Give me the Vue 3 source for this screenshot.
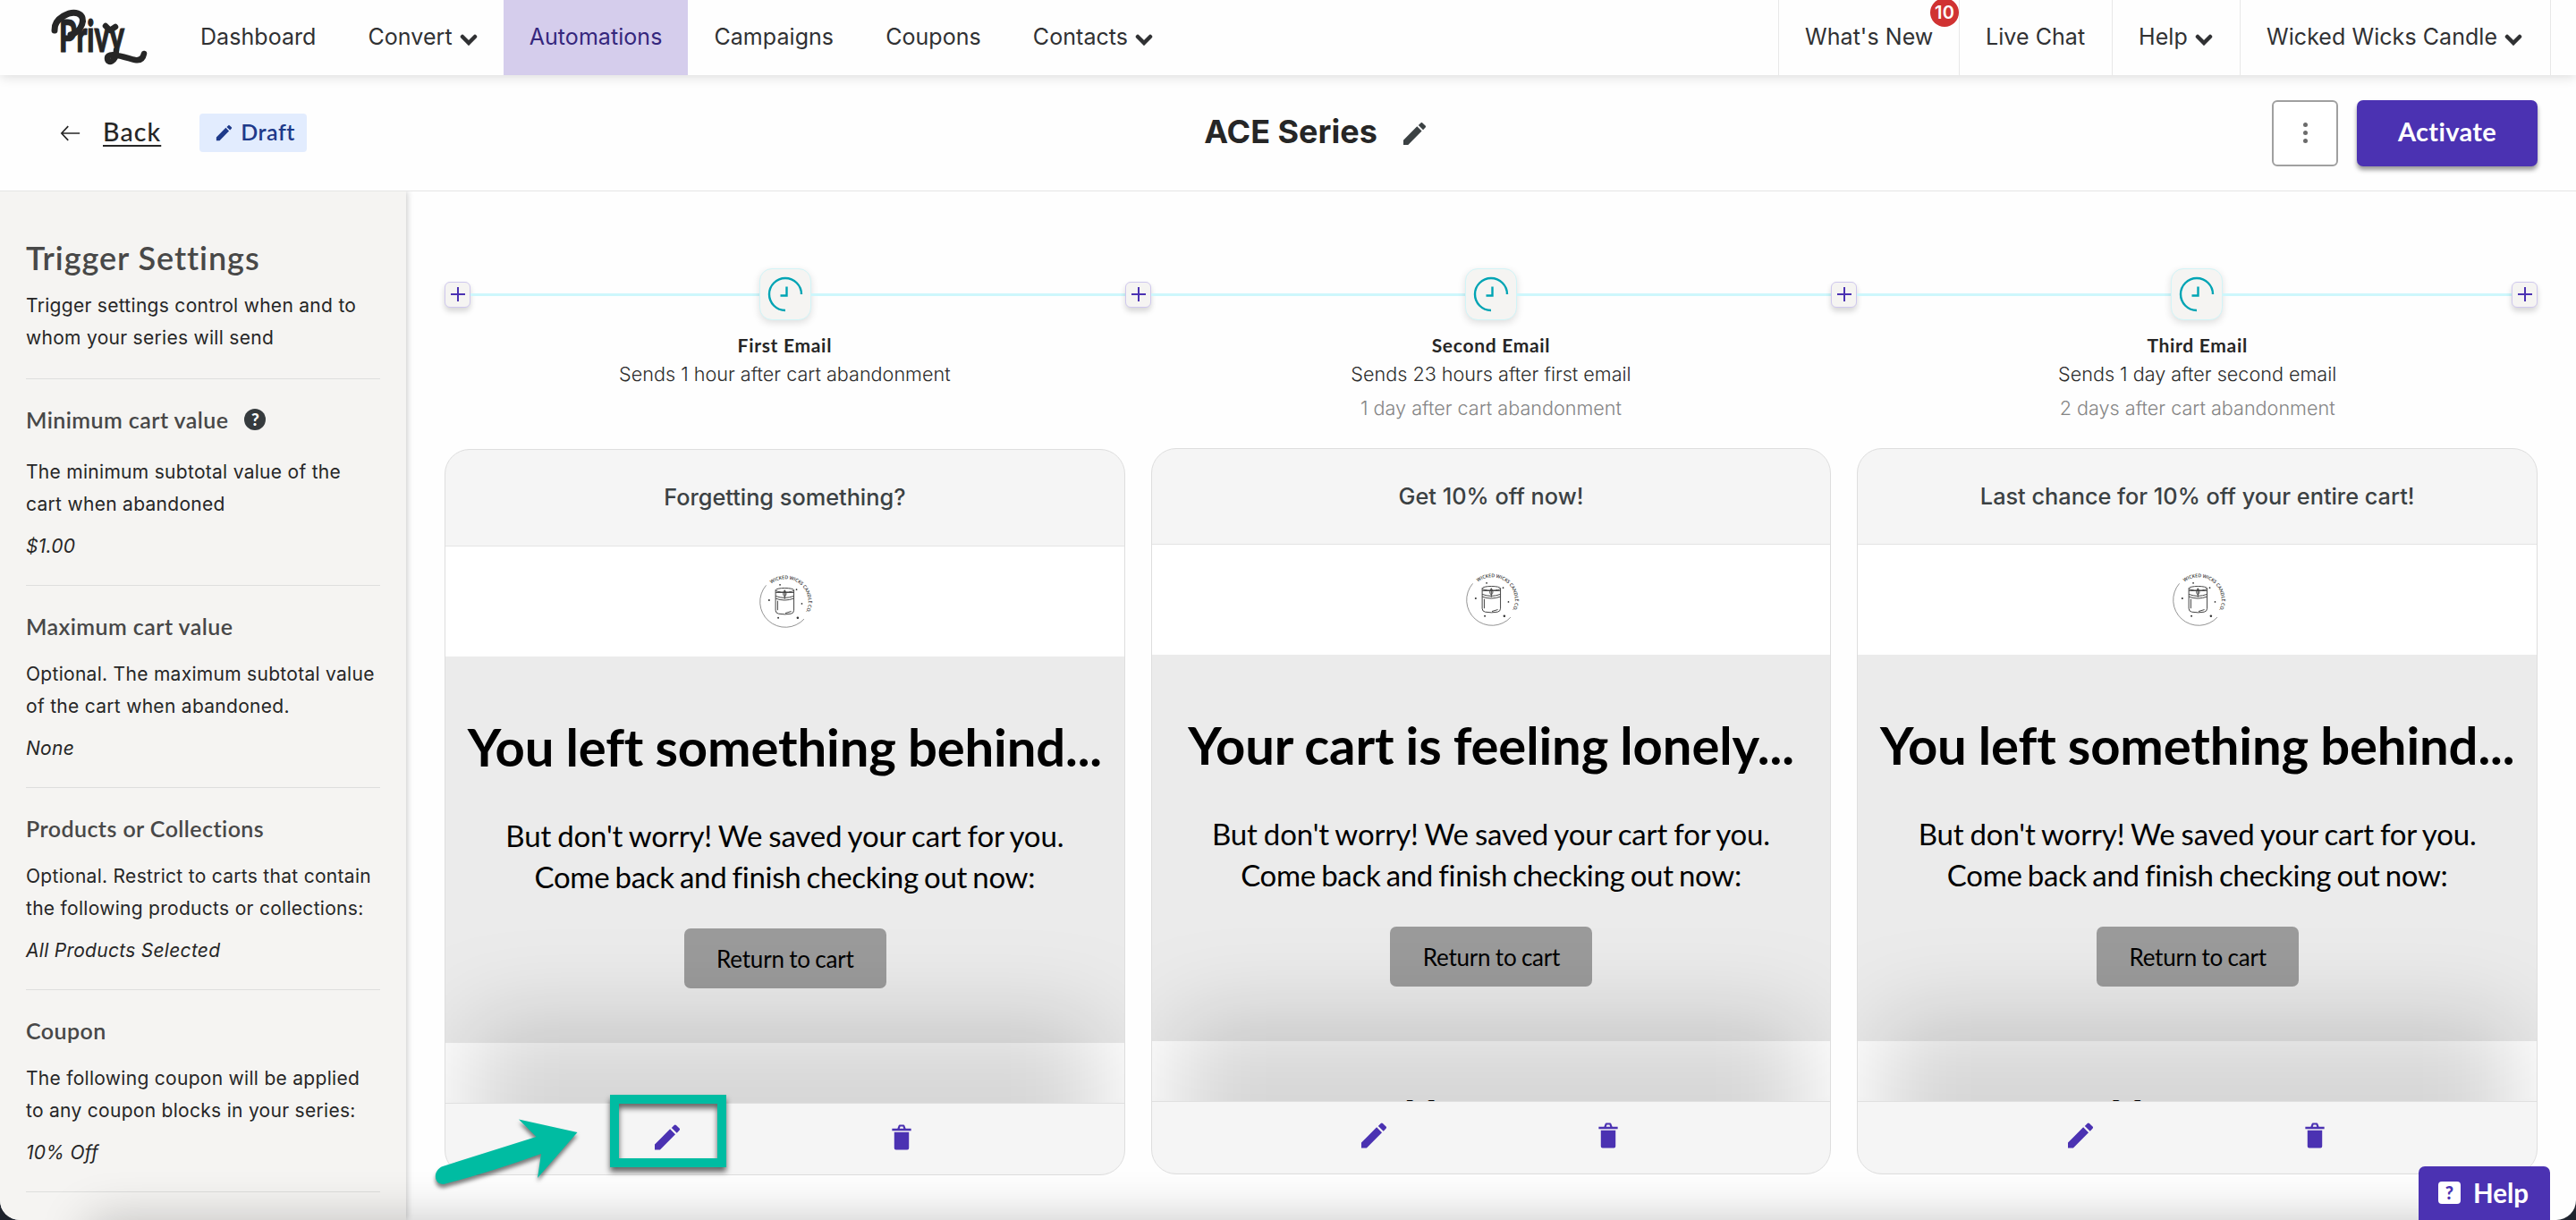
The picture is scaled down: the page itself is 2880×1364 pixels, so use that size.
<script setup>
const leftNav = [
  { label: 'Dashboard' },
  { label: 'Convert', menu: true },
  { label: 'Automations', active: true },
  { label: 'Campaigns' },
  { label: 'Coupons' },
  { label: 'Contacts', menu: true },
]

const rightNav = [
  { label: "What's New", badge: 10, cls: 'news' },
  { label: 'Live Chat', cls: 'chat' },
  { label: 'Help', menu: true, cls: 'help-menu' },
  { label: 'Wicked Wicks Candle', menu: true, cls: 'account' },
]

const settings = [
  {
    title: 'Minimum cart value',
    help: true,
    lines: ['The minimum subtotal value of the', 'cart when abandoned'],
    value: '$1.00',
  },
  {
    title: 'Maximum cart value',
    lines: ['Optional. The maximum subtotal value', 'of the cart when abandoned.'],
    value: 'None',
  },
  {
    title: 'Products or Collections',
    lines: ['Optional. Restrict to carts that contain', 'the following products or collections:'],
    value: 'All Products Selected',
  },
  {
    title: 'Coupon',
    lines: ['The following coupon will be applied', 'to any coupon blocks in your series:'],
    value: '10% Off',
  },
]

const emails = [
  {
    name: 'First Email',
    sends: 'Sends 1 hour after cart abandonment',
    total: '',
    subject: 'Forgetting something?',
    heading: 'You left something behind...',
    peek: '',
  },
  {
    name: 'Second Email',
    sends: 'Sends 23 hours after first email',
    total: '1 day after cart abandonment',
    subject: 'Get 10% off now!',
    heading: 'Your cart is feeling lonely...',
    peek: 'Your cart',
  },
  {
    name: 'Third Email',
    sends: 'Sends 1 day after second email',
    total: '2 days after cart abandonment',
    subject: 'Last chance for 10% off your entire cart!',
    heading: 'You left something behind...',
    peek: 'Your cart',
  },
]
</script>

<template>
  <div class="window">
    <div class="page">
      <nav class="topbar">
        <svg class="logo" viewBox="0 0 110 62" role="img">
          <path d="M4 22C3 8 22 0 30 3C41 7 34 24 22 27" fill="none" stroke="#262626" stroke-width="7" stroke-linecap="round" />
          <text class="logo-text" x="9" y="46" textLength="73" lengthAdjust="spacingAndGlyphs">Privy</text>
          <path d="M73 44C73 58 63 60 63 53C64 45 82 52 94 55C100 56 103 53 104 48" fill="none" stroke="#262626" stroke-width="6.500" stroke-linecap="round" stroke-linejoin="round" />
          <path d="M61 17L66 22L72 18" fill="none" stroke="#262626" stroke-width="6.500" stroke-linecap="round" stroke-linejoin="round" />
        </svg>
        <div class="nav-left">
          <a v-for="n in leftNav" :key="n.label" class="nav-item" :class="{ active: n.active }">
            {{ n.label }}
            <svg v-if="n.menu" class="chev" viewBox="0 0 20 13"><path d="M3 3l7 7 7-7" /></svg>
          </a>
        </div>
        <div class="nav-right">
          <a v-for="n in rightNav" :key="n.label" class="nav-item boxed" :class="n.cls">
            {{ n.label }}
            <svg v-if="n.menu" class="chev" viewBox="0 0 20 13"><path d="M3 3l7 7 7-7" /></svg>
            <span v-if="n.badge" class="badge">{{ n.badge }}</span>
          </a>
        </div>
      </nav>

      <header class="subbar">
        <div class="sub-left">
          <svg class="back-arrow" viewBox="0 0 26 20"><path d="M24 10H2M10 1.500L2 10l8 8.500" /></svg>
          <a class="back">Back</a>
          <span class="draft">
            <svg class="draft-pen" viewBox="0 0 24 24"><path d="M3 17.2V21h3.8L17.8 9.9l-3.8-3.8zM20.7 7a1 1 0 0 0 0-1.4l-2.3-2.3a1 1 0 0 0-1.4 0l-1.9 1.9 3.8 3.7z" /></svg>
            <b>Draft</b>
          </span>
        </div>
        <div class="sub-title">
          <h1>ACE Series</h1>
          <svg class="title-pen" viewBox="3 3 18 18"><path d="M3 17.2V21h3.8L17.8 9.9l-3.8-3.8zM20.7 7a1 1 0 0 0 0-1.4l-2.3-2.3a1 1 0 0 0-1.4 0l-1.9 1.9 3.8 3.7z" /></svg>
        </div>
        <div class="sub-right">
          <button class="dots"><i></i><i></i><i></i></button>
          <button class="activate">Activate</button>
        </div>
      </header>

      <div class="body">
        <aside class="sidebar">
          <h2>Trigger Settings</h2>
          <p class="side-text">Trigger settings control when and to<br />whom your series will send</p>
          <section v-for="s in settings" :key="s.title" class="setting">
            <h3 :class="{ spaced: s.help }">
              {{ s.title }}
              <span v-if="s.help" class="tip">?</span>
            </h3>
            <p class="side-text">{{ s.lines[0] }}<br />{{ s.lines[1] }}</p>
            <p class="side-value">{{ s.value }}</p>
          </section>
          <div class="side-end"></div>
        </aside>

        <main class="main">
          <div class="timeline">
            <template v-for="(e, i) in emails" :key="e.name">
              <span class="plus"><svg viewBox="0 0 18 18"><path d="M9 1v16M1 9h16" /></svg></span>
              <span class="line" :class="{ short: i === 0 }"></span>
              <span class="clock">
                <svg viewBox="0 0 40 40"><path d="M38 20A18 18 0 1 0 20 38M21.500 11.500V21.500H14.500" /></svg>
              </span>
              <span class="line" :class="{ short: i === 2 }"></span>
            </template>
            <span class="plus"><svg viewBox="0 0 18 18"><path d="M9 1v16M1 9h16" /></svg></span>
          </div>

          <div class="columns labels">
            <div v-for="e in emails" :key="e.name" class="label">
              <h4>{{ e.name }}</h4>
              <p class="sends">{{ e.sends }}</p>
              <p class="total">{{ e.total }}</p>
            </div>
          </div>

          <div class="columns">
            <article v-for="(e, i) in emails" :key="e.name" class="card" :class="{ first: i === 0 }">
              <div class="subject">{{ e.subject }}</div>
              <div class="preview">
                <div class="brand">
                  <svg viewBox="0 0 100 100">
                    <defs><path :id="'ring' + i" d="M26.300 19A39 39 0 0 1 84.800 67.600" /></defs>
                    <path d="M17.500 21.800A43 43 0 0 0 81.700 79" class="thin" />
                    <text class="ring-text"><textPath :href="'#ring' + i" textLength="104">WICKED WICKS CANDLE CO.</textPath></text>
                    <g class="candle">
                      <path d="M33.500 30v34q0 5 5 6q11 2 21 0q5-1 5-6V30" />
                      <ellipse cx="49" cy="30" rx="15.500" ry="3.500" />
                      <path d="M33.500 34h31M33.500 40q15 6 31 0M33.500 44q15 6 31 0M37 48v16M50 69l10-3" />
                      <path d="M49 30q-5 7 0 11q5-4 0-11v15" />
                    </g>
                    <g fill="#333">
                      <circle cx="41" cy="21" r="1.400" /><circle cx="69" cy="29" r="1.300" /><circle cx="22.500" cy="47" r="1.600" />
                      <circle cx="78" cy="53" r="1.300" /><circle cx="38" cy="77" r="1.500" /><circle cx="71" cy="77" r="1.900" />
                    </g>
                  </svg>
                </div>
                <div class="hero">
                  <h5>{{ e.heading }}</h5>
                  <p>But don't worry! We saved your cart for you.<br /><span class="tight">Come back and finish checking out now:</span></p>
                  <span class="cta">Return to cart</span>
                </div>
                <div class="peek">{{ e.peek }}</div>
                <div class="shade"></div>
              </div>
              <div class="actions">
                <svg class="act" viewBox="3 3 18 18"><path d="M3 17.200V21h3.800L17.800 9.900l-3.800-3.800zM20.700 7a1 1 0 0 0 0-1.400l-2.300-2.300a1 1 0 0 0-1.400 0l-1.900 1.900 3.800 3.700z" /></svg>
                <svg class="act" viewBox="0 0 28 30"><path d="M5.500 9h17v18.500a2 2 0 0 1-2 2h-13a2 2 0 0 1-2-2zM3 5h22v2.500H3zM9 5.500l1.500-4a1.500 1.500 0 0 1 1.500-1h4a1.500 1.500 0 0 1 1.500 1l1.500 4h-2.500l-1-3h-3l-1 3z" /></svg>
              </div>
            </article>
          </div>
        </main>
      </div>

      <div class="page-shade"></div>

      <div class="mark-box"></div>
      <svg class="mark-arrow" viewBox="0 0 176 92">
        <path d="M170.500 26L105 11.500L124.500 31L20 64C9 68 9 84 21 84Q75 70 130 50L126 77Z" />
      </svg>

      <button class="help">
        <span class="help-icon">?</span>
        Help
      </button>
    </div>
  </div>
</template>

<style>
body {
  overflow: hidden;
}
</style>

<style scoped>
.window {
  width: 2880px;
  height: 1364px;
  background: #1f242e;
}
.page {
  position: relative;
  width: 2880px;
  height: 1364px;
  box-sizing: border-box;
  overflow: hidden;
  border-radius: 0 0 22px 22px;
  background: #fefefe;
  font-family: Inter, "Liberation Sans", sans-serif;
  color: #262626;
  display: flex;
  flex-direction: column;
}
h1, h2, h3, h4, h5, p {
  margin: 0;
}
button {
  border: 0;
  padding: 0;
  font-family: inherit;
}
svg {
  display: block;
}

/* top navigation */
.topbar {
  position: relative;
  z-index: 2;
  height: 84px;
  flex: none;
  display: flex;
  background: #fefefe;
  box-shadow: 0 2px 12px rgba(0, 0, 0, 0.14);
}
.logo {
  width: 110px;
  height: 62px;
  margin: 12px 28px 0 57px;
  overflow: visible;
}
.logo-text {
  font: 900 49px Lato, sans-serif;
  fill: #262626;
  stroke: #262626;
  stroke-width: 1.200;
}
.nav-left {
  display: flex;
}
.nav-right {
  display: flex;
  margin-left: auto;
  margin-right: 28px;
  border-right: 1px solid #e8e8e8;
}
.nav-item {
  position: relative;
  box-sizing: border-box;
  height: 84px;
  padding: 0 29px 3px;
  display: flex;
  align-items: center;
  font-size: 25px;
  letter-spacing: 0.060px;
  color: #303133;
  white-space: nowrap;
}
.nav-item.active {
  background: #d5cdec;
  color: #35277d;
}
.boxed {
  border-left: 1px solid #e8e8e8;
}
.news { width: 202px; }
.chat { width: 171px; }
.help-menu { width: 143px; }
.account { width: 347px; }
.chev {
  width: 20px;
  height: 13px;
  margin: 7px 0 0 8px;
}
.chev path {
  fill: none;
  stroke: #303133;
  stroke-width: 4.5;
  stroke-linecap: round;
}
.badge {
  position: absolute;
  right: 0;
  top: -2px;
  width: 32px;
  height: 32px;
  border-radius: 50%;
  background: #d03232;
  color: #fff;
  font-size: 20px;
  font-weight: 600;
  line-height: 33px;
  text-align: center;
}

/* series header */
.subbar {
  height: 130px;
  flex: none;
  box-sizing: border-box;
  border-bottom: 1px solid #e5e5e5;
  display: grid;
  grid-template-columns: 1fr auto 1fr;
  align-items: center;
  padding: 0 43px 0 67px;
}
.sub-left {
  display: flex;
  align-items: center;
}
.back-arrow {
  width: 24px;
  height: 20px;
}
.back-arrow path {
  fill: none;
  stroke: #262626;
  stroke-width: 1.800;
}
.back {
  margin-left: 24px;
  padding-bottom: 4px;
  font: 500 28.500px/36px Lato, sans-serif;
  letter-spacing: 1.100px;
  text-decoration: underline;
  text-decoration-thickness: 2px;
  text-underline-offset: 4px;
}
.draft {
  box-sizing: border-box;
  width: 120px;
  height: 43px;
  margin-left: 43px;
  padding-left: 16px;
  border-radius: 4px;
  background: #e2ecfe;
  color: #1e3a8a;
  display: flex;
  align-items: center;
}
.draft b {
  padding-bottom: 3px;
  font: 600 25px/30px Lato, sans-serif;
  letter-spacing: 0.5px;
}
.draft-pen {
  width: 23px;
  height: 23px;
  margin-right: 7px;
  fill: #1e3a8a;
}
.sub-title {
  display: flex;
  align-items: center;
  margin-left: 36px;
}
h1 {
  padding-bottom: 4px;
  font-size: 36px;
  font-weight: 700;
  line-height: 44px;
}
.title-pen {
  width: 25px;
  height: 25px;
  margin: 1px 0 0 29px;
  fill: #3b4143;
}
.sub-right {
  display: flex;
  justify-content: flex-end;
  gap: 21px;
}
.dots {
  box-sizing: border-box;
  width: 74px;
  height: 74px;
  border: 2px solid #a0a0a0;
  border-radius: 6px;
  background: #fff;
  display: flex;
  flex-direction: column;
  align-items: center;
  justify-content: center;
  gap: 4px;
}
.dots i {
  width: 5px;
  height: 5px;
  border-radius: 50%;
  background: #6b6b6b;
}
.activate {
  width: 202px;
  height: 74px;
  border-radius: 7px;
  background: #4b32b2;
  box-shadow: 0 4px 5px rgba(0, 0, 0, 0.4);
  color: #fff;
  font: 700 29px Lato, sans-serif;
  letter-spacing: 0.3px;
  padding-bottom: 5px;
}

.body {
  flex: 1;
  display: flex;
  min-height: 0;
}

/* sidebar */
.sidebar {
  box-sizing: border-box;
  width: 454px;
  padding: 54px 29px 0;
  background: #f5f4f2;
  box-shadow: 1px 0 7px rgba(0, 0, 0, 0.22);
  clip-path: inset(0 -14px 0 0);
}
h2 {
  font: 600 36px/40px Lato, sans-serif;
  letter-spacing: 0.95px;
  color: #484848;
}
.side-text {
  position: relative;
  top: 0.5px;
  font-size: 21px;
  line-height: 36px;
  letter-spacing: 0.29px;
  white-space: nowrap;
}
h2 + .side-text {
  margin: 15px 0 28px;
}
.setting {
  border-top: 1px solid #dededd;
  padding: 29px 0 26px;
}
h3 {
  display: flex;
  align-items: center;
  margin-bottom: 19px;
  font: 600 25px/32px Lato, sans-serif;
  letter-spacing: 0.43px;
  color: #484848;
}
h3.spaced {
  margin-bottom: 24px;
}
.tip {
  width: 24px;
  height: 24px;
  margin: -1px 0 0 18px;
  border-radius: 50%;
  background: #363b3e;
  color: #fff;
  font: 900 19px/24px Lato, sans-serif;
  text-align: center;
  letter-spacing: 0;
}
.side-value {
  margin-top: 12px;
  margin-bottom: -1px;
  font-size: 21px;
  font-style: italic;
  line-height: 36px;
  letter-spacing: 0.28px;
}
.side-end {
  border-top: 1px solid #dededd;
}

/* series */
.main {
  width: 2340px;
  margin: 86px 0 0 43px;
}
.timeline {
  height: 58px;
  display: flex;
  align-items: center;
}
.line {
  flex: 351;
  height: 3px;
  background: #cdf7fc;
}
.line.short {
  flex: 323;
}
.plus {
  box-sizing: border-box;
  width: 29px;
  height: 29px;
  border: 1px solid #cfc8ee;
  border-radius: 6px;
  background: #f5f4f2;
  box-shadow: 0 4px 6px rgba(0, 0, 0, 0.16);
  display: flex;
  align-items: center;
  justify-content: center;
}
.plus svg {
  width: 18px;
  height: 18px;
}
.plus path {
  stroke: #4b32b2;
  stroke-width: 2;
}
.clock {
  box-sizing: border-box;
  width: 58px;
  height: 58px;
  border: 1.500px solid #d2f4f7;
  border-radius: 14px;
  background: #f5f4f2;
  box-shadow: 0 3px 8px rgba(0, 0, 0, 0.13);
  display: flex;
  align-items: center;
  justify-content: center;
}
.clock svg {
  width: 40px;
  height: 40px;
}
.clock path {
  fill: none;
  stroke: #00a4b4;
  stroke-width: 2.400;
}
.columns {
  display: grid;
  grid-template-columns: repeat(3, 1fr);
  gap: 29px;
  align-items: start;
}
.labels {
  height: 143px;
}
.label {
  padding-top: 15px;
  text-align: center;
}
h4 {
  font: 700 21px/26px Lato, sans-serif;
  letter-spacing: 0.7px;
}
.sends,
.total {
  font-size: 21.600px;
  font-weight: 300;
  line-height: 32px;
  color: #2c2c2c;
}
.sends {
  margin-top: 3px;
}
.total {
  margin-top: 6px;
  color: #858585;
}

/* email cards */
.card {
  box-sizing: border-box;
  height: 812px;
  border: 1px solid #dedede;
  border-radius: 28px;
  overflow: hidden;
  background: #f5f5f5;
}
.card.first {
  margin-top: 1px;
}
.subject {
  box-sizing: border-box;
  height: 107px;
  padding-bottom: 2px;
  border-bottom: 1px solid #e4e4e4;
  display: flex;
  align-items: center;
  justify-content: center;
  font-size: 25.300px;
  font-weight: 500;
  color: #3b4143;
}
.first .subject {
  height: 108px;
}
.preview {
  position: relative;
  height: 622px;
  overflow: hidden;
  background: #fff;
  border-bottom: 1px solid #e0e0e0;
}
.brand {
  height: 123px;
  display: flex;
  justify-content: center;
}
.brand svg {
  width: 66px;
  height: 66px;
  margin: 29px 0 0 2px;
  overflow: visible;
}
.thin {
  fill: none;
  stroke: #777;
  stroke-width: 1.200;
}
.ring-text {
  font: 600 8px "Open Sans", sans-serif;
  fill: #333;
}
.candle {
  fill: none;
  stroke: #444;
  stroke-width: 1.500;
}
.hero {
  height: 432px;
  background: #ebebeb;
  display: flex;
  flex-direction: column;
  align-items: center;
  text-align: center;
  color: #000;
  font-family: Lato, sans-serif;
}
h5 {
  margin-top: 63px;
  font-size: 58px;
  font-weight: 700;
  line-height: 76px;
  letter-spacing: -0.130px;
  word-spacing: -0.800px;
  white-space: nowrap;
}
.hero p {
  margin-top: 38px;
  font-size: 33px;
  line-height: 46px;
  letter-spacing: -0.150px;
  word-spacing: -1.200px;
  white-space: nowrap;
}
.tight {
  letter-spacing: -0.300px;
  word-spacing: -1.900px;
}
.cta {
  width: 226px;
  height: 67px;
  margin: 35px 0 0 1px;
  border-radius: 7px;
  background: #9b9b9b;
  font-size: 26px;
  line-height: 68px;
  letter-spacing: -0.200px;
  word-spacing: -1px;
}
.peek {
  height: 67px;
  overflow: hidden;
  background: #fff;
  color: #000;
  font: 700 47px/54px Lato, sans-serif;
  padding-top: 56px;
  box-sizing: border-box;
  text-align: center;
}
.shade {
  position: absolute;
  top: 530px;
  left: 25px;
  right: 25px;
  height: 300px;
  border-radius: 20px;
  background: rgba(0, 0, 0, 0.16);
  filter: blur(50px);
}
.actions {
  height: 74px;
  display: flex;
  align-items: center;
  justify-content: space-evenly;
}
.act {
  width: 28px;
  height: 29px;
  fill: #4b32b2;
}

/* overlays */
.page-shade {
  position: absolute;
  left: 100px;
  right: 120px;
  top: 1366px;
  height: 120px;
  box-shadow: 0 0 56px rgba(0, 0, 0, 0.24);
}
.mark-box {
  position: absolute;
  left: 682px;
  top: 1224px;
  width: 110px;
  height: 61px;
  border: 10px solid #00bca2;
  filter: drop-shadow(0 5px 3px rgba(0, 0, 0, 0.6));
}
.mark-arrow {
  position: absolute;
  left: 475px;
  top: 1240px;
  width: 176px;
  height: 92px;
  fill: #00bca2;
  filter: drop-shadow(0 4px 2px rgba(0, 0, 0, 0.5));
  overflow: visible;
}
.help {
  position: absolute;
  left: 2704px;
  bottom: 0;
  width: 147px;
  height: 60px;
  border-radius: 7px 7px 0 0;
  background: #4b32b2;
  color: #fff;
  display: flex;
  align-items: center;
  gap: 14px;
  padding: 0 0 1px 22px;
  font: 700 29.500px Lato, sans-serif;
}
.help-icon {
  width: 25px;
  height: 25px;
  border-radius: 4px;
  background: #fff;
  color: #4b32b2;
  font: 900 20px/25px Lato, sans-serif;
}
</style>
